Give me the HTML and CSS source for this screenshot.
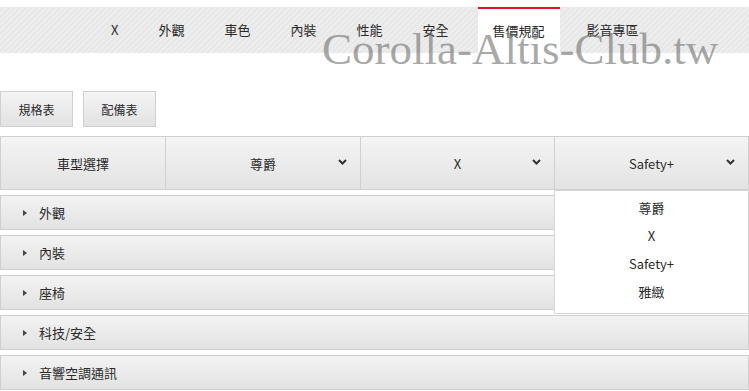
FILE: index.html
```html
<!DOCTYPE html>
<html>
  <head>
    <title>售價規配</title>
    <link rel="stylesheet" href="styles.css">
  </head>
  <body>
    <div class="nav">
      <a class="nav-item">X</a>
      <a class="nav-item">外觀</a>
      <a class="nav-item">車色</a>
      <a class="nav-item">內裝</a>
      <a class="nav-item">性能</a>
      <a class="nav-item">安全</a>
      <a class="nav-item active">售價規配</a>
      <a class="nav-item">影音專區</a>
    </div>
    <div class="watermark">Corolla-Altis-Club.tw</div>

    <div class="tabs">
      <button class="tab">規格表</button>
      <button class="tab">配備表</button>
    </div>

    <div class="select-row">
      <div class="cell label">車型選擇</div>
      <div class="cell">尊爵
        <svg class="caret" width="9" height="6" viewBox="0 0 9 6"><path d="M1 1 L4.5 4.5 L8 1" fill="none" stroke="#333" stroke-width="2"/></svg>
      </div>
      <div class="cell">X
        <svg class="caret" width="9" height="6" viewBox="0 0 9 6"><path d="M1 1 L4.5 4.5 L8 1" fill="none" stroke="#333" stroke-width="2"/></svg>
      </div>
      <div class="cell open">Safety+
        <svg class="caret" width="9" height="6" viewBox="0 0 9 6"><path d="M1 1 L4.5 4.5 L8 1" fill="none" stroke="#333" stroke-width="2"/></svg>
        <ul class="menu">
          <li>尊爵</li>
          <li>X</li>
          <li>Safety+</li>
          <li>雅緻</li>
        </ul>
      </div>
    </div>

    <div class="section"><span class="arrow"></span>外觀</div>
    <div class="section"><span class="arrow"></span>內裝</div>
    <div class="section"><span class="arrow"></span>座椅</div>
    <div class="section"><span class="arrow"></span>科技/安全</div>
    <div class="section"><span class="arrow"></span>音響空調通訊</div>
  </body>
</html>
```

FILE: styles.css
```css
body {
  margin: 0;
  background: #fff;
  font-family: "Noto Sans CJK TC", "Noto Sans", sans-serif;
  color: #2a2a2a;
  position: relative;
  overflow: hidden;
}
.nav {
  margin-top: 7px;
  height: 46px;
  display: flex;
  padding-left: 91px;
  background: repeating-linear-gradient(135deg, #ededed 0, #ededed 2px, #e7e7e7 2px, #e7e7e7 4px);
}
.nav-item {
  font-size: 13px;
  line-height: 46px;
  padding: 0 20px;
  white-space: nowrap;
}
.nav-item.active {
  background: #fff;
  border-top: 2px solid #e0162b;
  line-height: 44px;
  padding: 0 15px;
  margin: 0 7px 0 9px;
}
.watermark {
  position: absolute;
  left: 322px;
  top: 23px;
  font-family: "Liberation Serif", serif;
  font-size: 45px;
  color: rgba(110, 110, 110, 0.6);
  white-space: nowrap;
  pointer-events: none;
}
.tabs {
  display: flex;
  gap: 10px;
  margin-top: 38px;
}
.tab {
  width: 73px;
  height: 36px;
  border: 1px solid #d0d0d0;
  background: linear-gradient(#f4f4f4, #e2e2e2);
  font-family: inherit;
  font-size: 12px;
  color: #2a2a2a;
  padding: 0;
}
.select-row {
  display: grid;
  grid-template-columns: 164px 195px 194px 1fr;
  margin-top: 9px;
  height: 54px;
  border: 1px solid #d0d0d0;
  box-sizing: border-box;
}
.cell {
  position: relative;
  display: flex;
  align-items: center;
  justify-content: center;
  font-size: 13px;
  background: linear-gradient(#f4f4f4, #e3e3e3);
  border-left: 1px solid #d0d0d0;
}
.cell.label {
  border-left: none;
}
.caret {
  position: absolute;
  right: 13px;
  top: 22px;
}
.menu {
  position: absolute;
  left: -1px;
  right: -1px;
  top: 53px;
  margin: 0;
  padding: 3px 0 7px;
  list-style: none;
  background: #fff;
  border: 1px solid #d6d6d6;
  z-index: 2;
}
.menu li {
  text-align: center;
  line-height: 28px;
  font-size: 13px;
}
.section {
  margin-top: 5px;
  height: 35px;
  box-sizing: border-box;
  border: 1px solid #cfcfcf;
  background: linear-gradient(#f3f3f3, #e2e2e2);
  display: flex;
  align-items: center;
  padding-left: 22px;
  font-size: 13px;
}
.arrow {
  width: 0;
  height: 0;
  border-top: 3.5px solid transparent;
  border-bottom: 3.5px solid transparent;
  border-left: 4px solid #444;
  margin-right: 12px;
}
```
